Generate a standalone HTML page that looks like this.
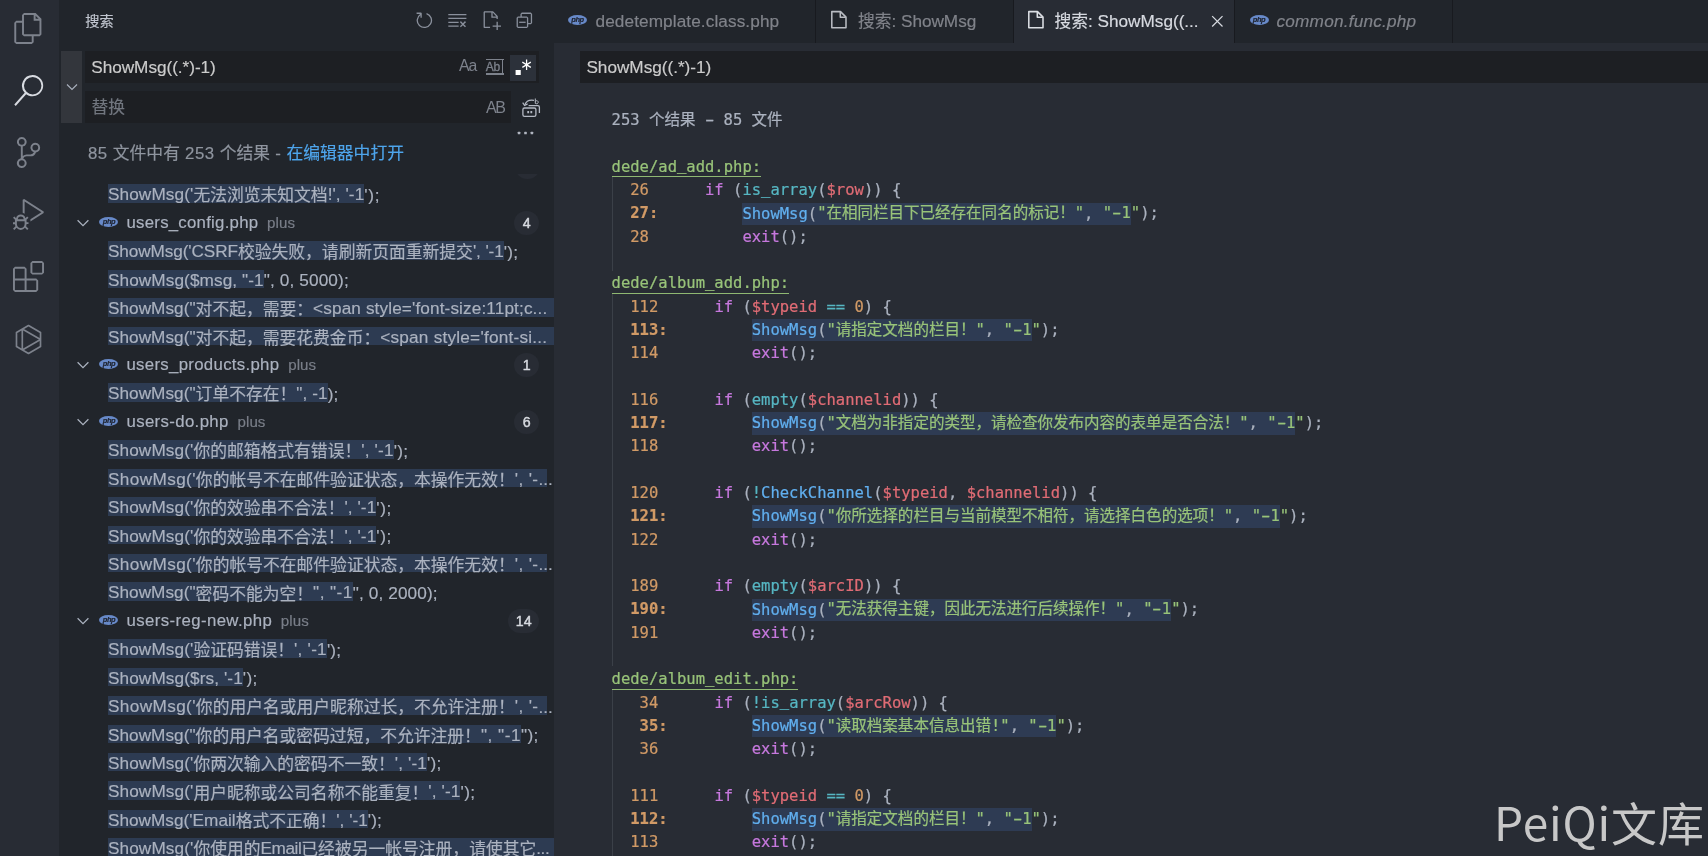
<!DOCTYPE html>
<html lang="zh-CN">
<head>
<meta charset="utf-8">
<title>搜索: ShowMsg((.*)-1)</title>
<style>
*{box-sizing:border-box;margin:0;padding:0}
html,body{width:1708px;height:857px;overflow:hidden;background:#282c34}
body{position:relative;font-family:"Liberation Sans","Noto Sans CJK SC",sans-serif;font-size:16.8px;color:#abb2bf;-webkit-font-smoothing:antialiased}
.abs{position:absolute}
.row,.tab,.inp,#msg,#side .title{-webkit-text-stroke:0.18px}
#act,#side,#tabs,#ed,#wm{will-change:transform}
#act{position:absolute;left:0;top:0;width:60px;height:857px;background:#282c34}
#act svg{position:absolute;left:12.7px;width:31px;height:31px;fill:#7d828c}
#act svg.on{fill:#d7dae0}
#side{position:absolute;left:59px;top:0;width:495px;height:857px;background:#21252b;overflow:hidden}
#sw{position:absolute;left:0.7px;top:0;width:494.3px;height:857px}
#side .title{position:absolute;left:25.5px;top:10px;height:22px;line-height:22px;font-size:14.2px;color:#c0c5cf}
.hic{position:absolute;top:9.6px;width:20.7px;height:20.7px;fill:#8a909c}
#tog{position:absolute;left:1.8px;top:51.1px;width:20.5px;height:71.9px;background:#33363c}
#tog svg{position:absolute;left:2.1px;top:28.1px;width:16px;height:16px}
.inp{position:absolute;background:#1d1f23;height:31.7px}
.inp .tx{position:absolute;left:6.1px;top:0.5px;line-height:31.7px;font-size:17.2px;color:#cccccc;white-space:pre}
.inp .ph{position:absolute;left:6.3px;top:1.6px;line-height:32.3px;font-size:16.8px;color:#71767f;white-space:pre}
.ibtn{position:absolute;font-size:15px;color:#7d828c;line-height:26px;height:26px;text-align:center;white-space:pre}
#msg{position:absolute;left:28.3px;top:142px;line-height:24px;font-size:16.8px;color:#8f959f;white-space:pre}
#msg a{color:#4ea5ec;text-decoration:none}
.row{position:absolute;left:0;width:494.3px;height:28.43px;line-height:30.0px;white-space:pre;font-size:16.8px;color:#abb2bf}
.row.m{padding-left:48.3px}
.row .hl{background:#2d3b52;font-size:11px;padding:6.4px 0 0 0}
.row .cj{font-size:16.8px;position:relative;top:0.7px}
.row .l{font-size:17.2px}

.cj{line-height:0;letter-spacing:0}
.chev{position:absolute;left:15.6px;top:7px}
.php{position:absolute;left:39.8px;top:9px;width:19px;height:10px;border-radius:50%;background:#6789c8;overflow:hidden}
.php i{position:absolute;left:0;top:0;width:19px;text-align:center;font:italic bold 7.5px/9.5px "Liberation Sans",sans-serif;color:#1f2430;letter-spacing:-0.4px}
.row.f{padding-left:66.8px}
.row .fn{color:#abb2bf;letter-spacing:-0.2px}
.row .dir{margin-left:8.5px;font-size:15.1px;color:#797e88;letter-spacing:-0.2px}
.badge{position:absolute;right:15px;top:2.6px;min-width:24.5px;height:24.5px;line-height:24.5px;border-radius:12.25px;background:#282c34;color:#d7dae0;font-size:14.2px;font-weight:normal;-webkit-text-stroke:0.45px;text-align:center;padding:0 7.4px}
#tabs{position:absolute;left:554px;top:0;width:1154px;height:43px;background:#21252b}
.tab{position:absolute;top:0;height:43px;border-right:1px solid #181a1f;color:#80838a;font-size:16.8px;line-height:43px;white-space:pre}
.tab.on{background:#282c34;color:#d7dae0}
.tab .lb{position:absolute;top:0}
.tab .l,.tab .lb{font-size:17.2px}
.tab .cj{font-size:16.8px}
.tab .php{top:14.8px}
.tab svg{position:absolute}
#ed{position:absolute;left:554px;top:43px;width:1154px;height:814px;background:#282c34;overflow:hidden}
#ed .inp{left:26px;top:8px;width:1128px;height:31.5px}
#code{position:absolute;left:57.6px;top:66.2px;-webkit-text-stroke:0.22px;font-family:"DejaVu Sans Mono","Noto Sans CJK SC",monospace;font-size:15.52px;line-height:23.3px;color:#abb2bf;white-space:pre}
#code .ln{height:23.3px}
#code .z{font-family:"Noto Sans CJK SC",sans-serif;line-height:0}
.k{color:#c678dd}.f{color:#61afef}.c{color:#56b6c2}.v{color:#e06c75}.s{color:#98c379}.n{color:#d19a66}.b{font-weight:bold}
.fp{color:#98c379;display:inline-block;vertical-align:top;height:21.6px;line-height:23.29px;border-bottom:1.4px solid #8fb872}
.eh{background:#2e3b53;padding:1.8px 0 2.5px}
.us{position:relative;top:-1.5px}
.hy{display:inline-block;transform:scaleX(1.75)}
.guide{position:absolute;left:57.6px;width:1px;background:#3b4048}
#wm{position:absolute;left:1493.9px;top:785.9px;font-family:"Noto Sans CJK SC",sans-serif;font-size:46px;line-height:70px;color:#c8c8c8;white-space:pre;letter-spacing:0.85px}
#bl{position:absolute;left:0;top:856px;width:1708px;height:1px;background:#fff}
</style>
</head>
<body>
<div id="act">
<svg class="" style="top:13.3px" viewBox="0 0 24 24"><path d="M17.5 0h-9L7 1.5V6H2.5L1 7.5v15.07L2.5 24h12.07L16 22.57V18h4.7l1.3-1.43V4.5L17.5 0zm0 2.12l2.38 2.38H17.5V2.12zm-3 20.38h-12v-15H7v9.07L8.5 18h6v4.5zm6-6h-12v-15H16V6h4.5v10.5z"/></svg>
<svg class="on" style="top:75.3px" viewBox="0 0 24 24"><path d="M15.25 0a8.25 8.25 0 0 0-6.18 13.72L1 22.88l1.12 1.12 8.05-9.12A8.251 8.251 0 1 0 15.25.01V0zm0 15a6.75 6.75 0 1 1 0-13.5 6.75 6.75 0 0 1 0 13.5z"/></svg>
<svg style="top:137.4px" viewBox="0 0 24 24"><path d="M21.007 8.222A3.738 3.738 0 0 0 15.045 5.2a3.737 3.737 0 0 0 1.156 6.583 2.988 2.988 0 0 1-2.668 1.67h-2.99a4.456 4.456 0 0 0-2.989 1.165V7.4a3.737 3.737 0 1 0-1.494 0v9.117a3.776 3.776 0 1 0 1.816.099 2.99 2.99 0 0 1 2.668-1.667h2.99a4.484 4.484 0 0 0 4.223-3.039 3.736 3.736 0 0 0 3.25-3.687zM4.565 3.738a2.242 2.242 0 1 1 4.484 0 2.242 2.242 0 0 1-4.484 0zm4.484 16.441a2.242 2.242 0 1 1-4.484 0 2.242 2.242 0 0 1 4.484 0zm8.221-9.715a2.242 2.242 0 1 1 0-4.485 2.242 2.242 0 0 1 0 4.485z"/></svg>
<svg style="top:199.4px" viewBox="0 0 24 24"><path d="M10.94 13.5l-1.32 1.32a3.73 3.73 0 0 0-7.24 0L1.06 13.5 0 14.56l1.72 1.72-.22.22V18H0v1.5h1.5v.08c.077.489.214.966.41 1.42L0 22.94 1.06 24l1.65-1.65A4.308 4.308 0 0 0 6 24a4.31 4.31 0 0 0 3.29-1.65L10.94 24 12 22.94 10.09 21c.198-.464.336-.951.41-1.45v-.1H12V18h-1.500v-1.500l-.22-.22L12 14.560l-1.060-1.060zM6 13.500a2.250 2.250 0 0 1 2.250 2.250h-4.500A2.250 2.250 0 0 1 6 13.500zm3 6a3.330 3.330 0 0 1-3 3 3.330 3.330 0 0 1-3-3v-2.250h6v2.250zm14.760-9.900v1.260L13.500 17.370V15.600l8.500-5.370L9 2v9.460a5.070 5.070 0 0 0-1.500-.72V.630L8.640 0l15.120 9.600z"/></svg>
<svg style="top:261.4px" viewBox="0 0 24 24"><path d="M13.500 1.500L15 0h7.500L24 1.500V9l-1.500 1.500H15L13.500 9V1.500zm1.500 0V9h7.500V1.500H15zM0 15V6l1.500-1.500H9L10.500 6v7.500H18l1.500 1.500v7.500L18 24H1.500L0 22.500V15zm9-1.500V6H1.500v7.500H9zM9 15H1.500v7.500H9V15zm1.500 7.500H18V15h-7.500v7.500z"/></svg>
<svg style="top:324.1px" viewBox="0 0 24 24"><path fill="none" stroke="#7d828c" stroke-width="1.3" stroke-linejoin="round" d="M12 1.2l9.300 5.400v10.800L12 22.800l-9.300-5.400V6.600zM7.200 3.900v16.200M7.200 3.900L21.300 12 7.200 20.100"/></svg>
</div>

<div id="side"><div id="sw">
<div class="title">搜索</div>
<svg class="hic" style="left:354px" viewBox="0 0 16 16"><path fill-rule="evenodd" clip-rule="evenodd" d="M4.681 3H2V2h3.500l.5.500V6H5V4a5 5 0 1 0 4.530-.761l.302-.954A6 6 0 1 1 4.681 3z"/></svg>
<svg class="hic" style="left:387.5px" viewBox="0 0 16 16"><path d="M10 12.600l.7.700 1.600-1.600 1.600 1.600.8-.7L13 11l1.700-1.600-.8-.8-1.600 1.700-1.600-1.700-.7.8 1.600 1.600-1.600 1.600zM1 4h14V3H1v1zm0 3h14V6H1v1zm8 2.500V9H1v1h8v-.5zM9 13v-1H1v1h8z"/></svg>
<svg class="hic" style="left:421.1px" viewBox="0 0 16 16"><path fill-rule="evenodd" clip-rule="evenodd" d="M9.500 1.100l3.400 3.500.1.400v2h-1V6H8V2H3v11h4v1H2.500l-.5-.5v-12l.5-.5h6.700l.3.100zM9 2v3h2.900L9 2zm4 14h-1v-3H9v-1h3V9h1v3h3v1h-3v3z"/></svg>
<svg class="hic" style="left:454.6px" viewBox="0 0 16 16"><path d="M9 9H4v1h5V9z"/><path fill-rule="evenodd" clip-rule="evenodd" d="M5 3l1-1h7l1 1v7l-1 1h-2v2l-1 1H3l-1-1V6l1-1h2V3zm1 2h4l1 1v4h2V3H6v2zm4 1H3v7h7V6z"/></svg>

<div id="tog"><svg viewBox="0 0 16 16"><path d="M3 5.500 8 10.500l5-5" fill="none" stroke="#abb2bf" stroke-width="1.100"/></svg></div>
<div class="inp" style="left:25.5px;top:51.1px;width:454px"><span class="tx" id="sin" style="letter-spacing:-0.041px">ShowMsg((.*)-1)</span></div>
<div class="inp" style="left:25.5px;top:90.7px;width:425.6px;height:32.3px"><span class="ph">替换</span></div>
<div class="ibtn" style="left:399.2px;top:53px;width:19px;font-size:15.8px;letter-spacing:-1px;text-align:left">Aa</div>
<div class="ibtn" id="ww" style="left:426px;top:59.2px;width:18.4px;height:16.3px;line-height:15.4px;font-size:12px;border-top:1.8px solid #7d828c;border-bottom:2px solid #7d828c;text-align:left;letter-spacing:-0.2px;-webkit-text-stroke:0.3px">Ab<span style="position:absolute;right:0.6px;top:0;width:1.3px;height:13.5px;background:#7d828c"></span></div>
<div class="abs" id="rx" style="left:450px;top:54.7px;width:26.3px;height:26.1px;background:#2c313a"><svg style="position:absolute;left:3.7px;top:2.7px" width="20.7" height="20.7" viewBox="0 0 16 16" fill="#fff"><path fill-rule="evenodd" clip-rule="evenodd" d="M10.012 2h.976v3.113l2.560-1.557.486.885L11.470 6l2.564 1.559-.485.885-2.561-1.557V10h-.976V6.887l-2.560 1.557-.486-.885L9.530 6 6.966 4.441l.485-.885 2.561 1.557V2zM2 10h4v4H2v-4z"/></svg></div>
<div class="ibtn" style="left:426.2px;top:94.6px;width:22px;font-size:16px;letter-spacing:-1.3px;text-align:left">AB</div>
<svg class="abs" style="left:458px;top:94px" width="26" height="26" viewBox="0 0 26 26" fill="none" stroke="#b4b9c3" stroke-width="1.3"><rect x="4.9" y="14" width="13" height="8.3" rx="1.6"/><path d="M10.600 11.700h9.300a1.500 1.500 0 0 1 1.500 1.500v5.800"/><path d="M16 6.300c-4.500-.8-8 1.200-9.300 4.600" stroke-width="1.200"/><path d="M4.700 8.600l1.900 2.900 3-1.600" stroke-width="1.200"/><path d="M17.300 4.500v5M17.300 7.300c1.800-1.300 2.900-.2 2.900 1s-1.300 2-2.900 1" stroke-width="1"/><path d="M9.300 18.200h1.800M12.400 18.200h1.800" stroke-width="2.200"/></svg>
<svg class="abs" style="left:455.2px;top:129.100px" width="22" height="8" viewBox="0 0 22 8" fill="#b0b5bf"><rect x="2.750" y="2.700" width="2.600" height="2.600" rx=".6"/><rect x="9.200" y="2.700" width="2.600" height="2.600" rx=".6"/><rect x="15.600" y="2.700" width="2.600" height="2.600" rx=".6"/></svg>
<div class="abs" style="left:455.4px;top:174.400px;width:25px;height:4.500px;overflow:hidden"><div style="position:absolute;left:0;top:-20px;width:24.500px;height:24.500px;border-radius:50%;background:#282c34"></div></div>

<div id="msg"><span id="m1" style="letter-spacing:0.491px"><span class="l">85 </span><span class="cj">文件中有</span><span class="l"> 253 </span><span class="cj">个结果</span><span class="l"> - </span></span><a class="cj">在编辑器中打开</a></div>
<div class="row m" id="r0" style="top:179.80px"><span class="hl" style="letter-spacing:0.068px"><span class="l" style="letter-spacing:0.102px">ShowMsg('</span><span class="cj">无法浏览未知文档</span><span class="l">!', '-1</span></span><span class="rest" style="letter-spacing:0.740px"><span class="l">');</span></span></div>
<div class="row f" id="r1" style="top:208.23px"><svg class="chev" width="16" height="16" viewBox="0 0 16 16"><path d="M2.6 5.2 8 10.6l5.4-5.4" fill="none" stroke="#abb2bf" stroke-width="1.25"/></svg><span class="php"><i>php</i></span><span class="fn" style="letter-spacing:0.250px">users_config.php</span><span class="dir" style="letter-spacing:0.149px;margin-left:8.60px">plus</span><span class="badge">4</span></div>
<div class="row m" id="r2" style="top:236.66px"><span class="hl" style="letter-spacing:-0.100px"><span class="l">ShowMsg('CSRF</span><span class="cj">校验失败，请刷新页面重新提交</span><span class="l">', '-1</span></span><span class="rest" style="letter-spacing:0.306px"><span class="l">');</span></span></div>
<div class="row m" id="r3" style="top:265.09px"><span class="hl" style="letter-spacing:0.092px"><span class="l">ShowMsg($msg, "-1</span></span><span class="rest" style="letter-spacing:0.133px"><span class="l">", 0, 5000);</span></span></div>
<div class="row m" id="r4" style="top:293.52px"><span class="hl" style="letter-spacing:0.121px;padding-right:30px"><span class="l" style="letter-spacing:0.034px">ShowMsg("</span><span class="cj">对不起，需要：</span><span class="l">&lt;span style='font-size:11pt;c</span><span class="l d">...</span></span></div>
<div class="row m" id="r5" style="top:321.95px"><span class="hl" style="letter-spacing:0.227px;padding-right:30px"><span class="l" style="letter-spacing:0.034px">ShowMsg("</span><span class="cj">对不起，需要花费金币：</span><span class="l">&lt;span style='font-si</span><span class="l d">...</span></span></div>
<div class="row f" id="r6" style="top:350.38px"><svg class="chev" width="16" height="16" viewBox="0 0 16 16"><path d="M2.6 5.2 8 10.6l5.4-5.4" fill="none" stroke="#abb2bf" stroke-width="1.25"/></svg><span class="php"><i>php</i></span><span class="fn" style="letter-spacing:0.306px">users_products.php</span><span class="dir" style="letter-spacing:0.074px;margin-left:8.80px">plus</span><span class="badge">1</span></div>
<div class="row m" id="r7" style="top:378.81px"><span class="hl" style="letter-spacing:0.095px"><span class="l" style="letter-spacing:0.034px">ShowMsg("</span><span class="cj">订单不存在！</span><span class="l">", -1</span></span><span class="rest" style="letter-spacing:0.100px"><span class="l">);</span></span></div>
<div class="row f" id="r8" style="top:407.24px"><svg class="chev" width="16" height="16" viewBox="0 0 16 16"><path d="M2.6 5.2 8 10.6l5.4-5.4" fill="none" stroke="#abb2bf" stroke-width="1.25"/></svg><span class="php"><i>php</i></span><span class="fn" style="letter-spacing:0.355px">users-do.php</span><span class="dir" style="letter-spacing:0.074px;margin-left:8.80px">plus</span><span class="badge">6</span></div>
<div class="row m" id="r9" style="top:435.67px"><span class="hl" style="letter-spacing:0.180px"><span class="l" style="letter-spacing:0.102px">ShowMsg('</span><span class="cj">你的邮箱格式有错误！</span><span class="l">', '-1</span></span><span class="rest" style="letter-spacing:0.306px"><span class="l">');</span></span></div>
<div class="row m" id="r10" style="top:464.10px"><span class="hl" style="letter-spacing:0.377px;padding-right:8.73px"><span class="l">ShowMsg('</span><span class="cj">你的帐号不在邮件验证状态，本操作无效！</span><span class="l">', '-</span></span><span class="l d" style="margin-left:-8.73px">...</span></div>
<div class="row m" id="r11" style="top:492.53px"><span class="hl" style="letter-spacing:0.077px"><span class="l" style="letter-spacing:0.102px">ShowMsg('</span><span class="cj">你的效验串不合法！</span><span class="l">', '-1</span></span><span class="rest" style="letter-spacing:0.573px"><span class="l">');</span></span></div>
<div class="row m" id="r12" style="top:520.96px"><span class="hl" style="letter-spacing:0.077px"><span class="l" style="letter-spacing:0.102px">ShowMsg('</span><span class="cj">你的效验串不合法！</span><span class="l">', '-1</span></span><span class="rest" style="letter-spacing:0.573px"><span class="l">');</span></span></div>
<div class="row m" id="r13" style="top:549.39px"><span class="hl" style="letter-spacing:0.377px;padding-right:8.73px"><span class="l">ShowMsg('</span><span class="cj">你的帐号不在邮件验证状态，本操作无效！</span><span class="l">', '-</span></span><span class="l d" style="margin-left:-8.73px">...</span></div>
<div class="row m" id="r14" style="top:577.82px"><span class="hl" style="letter-spacing:0.447px"><span class="l" style="letter-spacing:0.034px">ShowMsg("</span><span class="cj">密码不能为空！</span><span class="l">", "-1</span></span><span class="rest" style="letter-spacing:0.117px"><span class="l">", 0, 2000);</span></span></div>
<div class="row f" id="r15" style="top:606.25px"><svg class="chev" width="16" height="16" viewBox="0 0 16 16"><path d="M2.6 5.2 8 10.6l5.4-5.4" fill="none" stroke="#abb2bf" stroke-width="1.25"/></svg><span class="php"><i>php</i></span><span class="fn" style="letter-spacing:0.395px">users-reg-new.php</span><span class="dir" style="letter-spacing:0.149px;margin-left:8.50px">plus</span><span class="badge">14</span></div>
<div class="row m" id="r16" style="top:634.68px"><span class="hl" style="letter-spacing:0.234px"><span class="l" style="letter-spacing:0.102px">ShowMsg('</span><span class="cj">验证码错误！</span><span class="l">', '-1</span></span><span class="rest" style="letter-spacing:0.140px"><span class="l">');</span></span></div>
<div class="row m" id="r17" style="top:663.11px"><span class="hl" style="letter-spacing:0.102px"><span class="l">ShowMsg($rs, '-1</span></span><span class="rest" style="letter-spacing:0.306px"><span class="l">');</span></span></div>
<div class="row m" id="r18" style="top:691.54px"><span class="hl" style="letter-spacing:0.377px;padding-right:8.73px"><span class="l">ShowMsg('</span><span class="cj">你的用户名或用户昵称过长，不允许注册！</span><span class="l">', '-</span></span><span class="l d" style="margin-left:-8.73px">...</span></div>
<div class="row m" id="r19" style="top:719.97px"><span class="hl" style="letter-spacing:0.512px"><span class="l" style="letter-spacing:0.034px">ShowMsg("</span><span class="cj">你的用户名或密码过短，不允许注册！</span><span class="l">", "-1</span></span><span class="rest" style="letter-spacing:0.330px"><span class="l">");</span></span></div>
<div class="row m" id="r20" style="top:748.40px"><span class="hl" style="letter-spacing:0.136px"><span class="l" style="letter-spacing:0.102px">ShowMsg('</span><span class="cj">你两次输入的密码不一致！</span><span class="l">', '-1</span></span><span class="rest" style="letter-spacing:0.306px"><span class="l">');</span></span></div>
<div class="row m" id="r21" style="top:776.83px"><span class="hl" style="letter-spacing:0.109px"><span class="l" style="letter-spacing:0.102px">ShowMsg('</span><span class="cj">用户昵称或公司名称不能重复！</span><span class="l">', '-1</span></span><span class="rest" style="letter-spacing:0.473px"><span class="l">');</span></span></div>
<div class="row m" id="r22" style="top:805.26px"><span class="hl" style="letter-spacing:0.013px"><span class="l">ShowMsg('Email</span><span class="cj">格式不正确！</span><span class="l">', '-1</span></span><span class="rest" style="letter-spacing:0.040px"><span class="l">');</span></span></div>
<div class="row m" id="r23" style="top:833.69px"><span class="hl" style="letter-spacing:-0.436px;padding-right:30px"><span class="l" style="letter-spacing:0.102px">ShowMsg('</span><span class="cj">你使用的</span><span class="l">Email</span><span class="cj">已经被另一帐号注册，请使其它</span><span class="l d">...</span></span></div>
</div></div>

<div id="tabs">
<div class="tab" style="left:0;width:262px"><span class="php" style="left:14px"><i>php</i></span><span class="lb" id="t1l" style="left:41.5px;letter-spacing:0.098px">dedetemplate.class.php</span></div>
<div class="tab" style="left:262px;width:197.500px"><svg style="left:13.4px;top:8.2px" width="20" height="22" viewBox="0 0 20 22" fill="none" stroke="#b9bcc2" stroke-width="1.55" stroke-linejoin="round"><path d="M2.8 3.600h8.700l5.500 5.500v10.700H2.800z"/><path d="M11.300 3.800v5.500h5.500"/></svg><span class="lb" id="t2l" style="left:42px;letter-spacing:-0.044px"><span class="cj">搜索</span><span class="l">: ShowMsg</span></span></div>
<div class="tab on" style="left:459.500px;width:221.500px"><svg style="left:12.8px;top:8.2px" width="20" height="22" viewBox="0 0 20 22" fill="none" stroke="#dcdfe4" stroke-width="1.55" stroke-linejoin="round"><path d="M2.8 3.600h8.700l5.500 5.500v10.700H2.800z"/><path d="M11.300 3.800v5.500h5.500"/></svg><span class="lb" id="t3l" style="left:41px;letter-spacing:-0.018px"><span class="cj">搜索</span><span class="l">: ShowMsg((...</span></span><svg style="left:193px;top:10.8px" width="20.7" height="20.7" viewBox="0 0 16 16"><path d="M4 4l8 8M12 4l-8 8" stroke="#d7dae0" stroke-width="0.95" fill="none"/></svg></div>
<div class="tab" style="left:681px;width:218px"><span class="php" style="left:14.500px"><i>php</i></span><span class="lb" id="t4l" style="left:41.5px;font-style:italic;letter-spacing:0.212px">common.func.php</span></div>
</div>

<div id="ed">
<div class="inp"><span class="tx" id="ein" style="left:6.4px;letter-spacing:-0.014px">ShowMsg((.*)-1)</span></div>
<div class="guide" style="top:134.3px;height:93.3px"></div>
<div class="guide" style="top:250.7px;height:372.7px"></div>
<div class="guide" style="top:646.7px;height:168px"></div>
<div id="code"><div class="ln">253 <span class="z">个结果</span> <span class="hy">-</span> 85 <span class="z">文件</span></div><div class="ln"> </div><div class="ln"><span class="fp">dede/ad<span class="us">_</span>add.php:</span></div><div class="ln">  <span class="n">26</span>      <span class="k">if</span><span class="p"> (</span><span class="c">is<span class="us">_</span>array</span><span class="p">(</span><span class="v">$row</span><span class="p">)) {</span></div><div class="ln">  <span class="n b">27:</span>         <span class="eh"><span class="f">ShowMsg</span>(<span class="s">"<span class="z">在相同栏目下已经存在同名的标记！</span>"</span>, <span class="s">"<span class="hy">-</span>1</span></span><span class="s">"</span>);</div><div class="ln">  <span class="n">28</span>          <span class="k">exit</span><span class="p">();</span></div><div class="ln"> </div><div class="ln"><span class="fp">dede/album<span class="us">_</span>add.php:</span></div><div class="ln">  <span class="n">112</span>      <span class="k">if</span><span class="p"> (</span><span class="v">$typeid</span><span class="p"> </span><span class="c">==</span><span class="p"> </span><span class="n">0</span><span class="p">) {</span></div><div class="ln">  <span class="n b">113:</span>         <span class="eh"><span class="f">ShowMsg</span>(<span class="s">"<span class="z">请指定文档的栏目！</span>"</span>, <span class="s">"<span class="hy">-</span>1</span></span><span class="s">"</span>);</div><div class="ln">  <span class="n">114</span>          <span class="k">exit</span><span class="p">();</span></div><div class="ln"> </div><div class="ln">  <span class="n">116</span>      <span class="k">if</span><span class="p"> (</span><span class="c">empty</span><span class="p">(</span><span class="v">$channelid</span><span class="p">)) {</span></div><div class="ln">  <span class="n b">117:</span>         <span class="eh"><span class="f">ShowMsg</span>(<span class="s">"<span class="z">文档为非指定的类型，请检查你发布内容的表单是否合法！</span>"</span>, <span class="s">"<span class="hy">-</span>1</span></span><span class="s">"</span>);</div><div class="ln">  <span class="n">118</span>          <span class="k">exit</span><span class="p">();</span></div><div class="ln"> </div><div class="ln">  <span class="n">120</span>      <span class="k">if</span><span class="p"> (</span><span class="c">!</span><span class="f">CheckChannel</span><span class="p">(</span><span class="v">$typeid</span><span class="p">, </span><span class="v">$channelid</span><span class="p">)) {</span></div><div class="ln">  <span class="n b">121:</span>         <span class="eh"><span class="f">ShowMsg</span>(<span class="s">"<span class="z">你所选择的栏目与当前模型不相符，请选择白色的选项！</span>"</span>, <span class="s">"<span class="hy">-</span>1</span></span><span class="s">"</span>);</div><div class="ln">  <span class="n">122</span>          <span class="k">exit</span><span class="p">();</span></div><div class="ln"> </div><div class="ln">  <span class="n">189</span>      <span class="k">if</span><span class="p"> (</span><span class="c">empty</span><span class="p">(</span><span class="v">$arcID</span><span class="p">)) {</span></div><div class="ln">  <span class="n b">190:</span>         <span class="eh"><span class="f">ShowMsg</span>(<span class="s">"<span class="z">无法获得主键，因此无法进行后续操作！</span>"</span>, <span class="s">"<span class="hy">-</span>1</span></span><span class="s">"</span>);</div><div class="ln">  <span class="n">191</span>          <span class="k">exit</span><span class="p">();</span></div><div class="ln"> </div><div class="ln"><span class="fp">dede/album<span class="us">_</span>edit.php:</span></div><div class="ln">  <span class="n"> 34</span>      <span class="k">if</span><span class="p"> (</span><span class="c">!is<span class="us">_</span>array</span><span class="p">(</span><span class="v">$arcRow</span><span class="p">)) {</span></div><div class="ln">  <span class="n b"> 35:</span>         <span class="eh"><span class="f">ShowMsg</span>(<span class="s">"<span class="z">读取档案基本信息出错</span>!"</span>, <span class="s">"<span class="hy">-</span>1</span></span><span class="s">"</span>);</div><div class="ln">  <span class="n"> 36</span>          <span class="k">exit</span><span class="p">();</span></div><div class="ln"> </div><div class="ln">  <span class="n">111</span>      <span class="k">if</span><span class="p"> (</span><span class="v">$typeid</span><span class="p"> </span><span class="c">==</span><span class="p"> </span><span class="n">0</span><span class="p">) {</span></div><div class="ln">  <span class="n b">112:</span>         <span class="eh"><span class="f">ShowMsg</span>(<span class="s">"<span class="z">请指定文档的栏目！</span>"</span>, <span class="s">"<span class="hy">-</span>1</span></span><span class="s">"</span>);</div><div class="ln">  <span class="n">113</span>          <span class="k">exit</span><span class="p">();</span></div></div>
</div>
<div id="wm">PeiQi文库</div>
<div id="bl"></div>
</body>
</html>
